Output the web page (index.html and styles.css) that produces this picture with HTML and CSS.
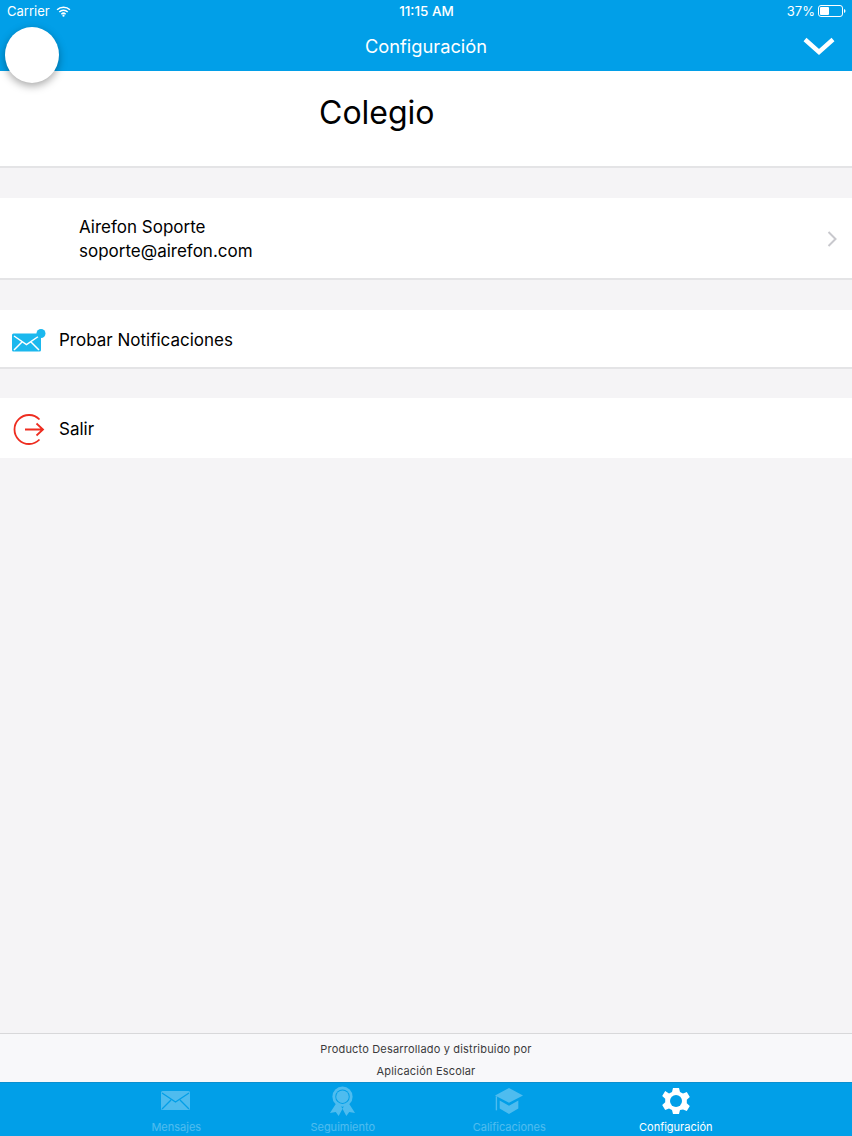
FILE: index.html
```html
<!DOCTYPE html>
<html lang="es">
<head>
<meta charset="utf-8">
<title>Configuración</title>
<link rel="stylesheet" href="styles.css">
</head>
<body>
<div class="app">
  <header class="top">
    <div class="status">
      <div class="status-side">
        <span>Carrier</span>
        <svg class="wifi" viewBox="0 0 16 12" width="15" height="11"><path d="M1 4.200a10 10 0 0 1 14 0M3.400 6.600a6.600 6.600 0 0 1 9.200 0M5.700 8.900a3.300 3.300 0 0 1 4.600 0" fill="none" stroke="#fff" stroke-width="1.600"/><circle cx="8" cy="10.600" r="1.200" fill="#fff"/></svg>
      </div>
      <div class="status-time">11:15 AM</div>
      <div class="status-side status-right">
        <span>37%</span>
        <svg viewBox="0 0 28 12" width="28" height="12"><rect x="0.500" y="0.500" width="24" height="11" rx="2.500" fill="none" stroke="#fff"/><rect x="2" y="2" width="9" height="8" rx="1" fill="#fff"/><path d="M26 4v4a2 2 0 0 0 1.500-2A2 2 0 0 0 26 4z" fill="#fff"/></svg>
      </div>
    </div>
    <div class="nav">
      <div class="nav-title">Configuración</div>
      <svg class="nav-chevron" viewBox="0 0 32 18" width="32" height="18"><path d="M2 2.500 16 15 30 2.500" fill="none" stroke="#fff" stroke-width="4.400"/></svg>
    </div>
  </header>
  <div class="avatar"></div>

  <main class="content">
    <section class="school"><h1>Colegio</h1></section>
    <section class="row row-user">
      <div class="user-text">
        <div>Airefon Soporte</div>
        <div>soporte@airefon.com</div>
      </div>
      <svg class="row-chevron" viewBox="0 0 10 16" width="10" height="16"><path d="M1.500 1 8.500 8 1.500 15" fill="none" stroke="#c8c8cd" stroke-width="2"/></svg>
    </section>
    <section class="row row-test">
      <svg class="row-icon" viewBox="0 0 36 26" width="36" height="26"><rect x="0" y="6.500" width="29" height="18" rx="1.500" fill="#1bb8ee"/><path d="M2 9 14.500 17.500 27 9M2 23l8.500-8.500M27 23l-8.500-8.500" fill="none" stroke="#fff" stroke-width="1.500"/><circle cx="29" cy="6.500" r="4.500" fill="#1bb8ee"/></svg>
      <span>Probar Notificaciones</span>
    </section>
    <section class="row row-exit">
      <svg class="row-icon" viewBox="0 0 36 32" width="36" height="32"><path d="M27.500 6.500A14.500 14.500 0 1 0 27.500 26.500" fill="none" stroke="#ee2d20" stroke-width="1.800"/><path d="M13 16.500H31M24.500 10.500l6.500 6-6.500 6" fill="none" stroke="#ee2d20" stroke-width="1.800"/></svg>
      <span>Salir</span>
    </section>
  </main>

  <footer class="credits">
    <div>Producto Desarrollado y distribuido por</div>
    <div>Aplicación Escolar</div>
  </footer>

  <nav class="tabs">
    <div class="tab">
      <div class="tab-icon"><svg viewBox="0 0 30 20" width="30" height="20"><rect width="29" height="19" rx="1.500" fill="#fff"/><path d="M1 2 14.500 11 28 2M1 18l9-9M28 18l-9-9" fill="none" stroke="#019fe8" stroke-width="1.300"/></svg></div>
      <span>Mensajes</span>
    </div>
    <div class="tab">
      <div class="tab-icon"><svg viewBox="0 0 28 32" width="27" height="31"><path d="M8 17 1 28l6-1 3 4 6-11zM20 17l7 11-6-1-3 4-6-11z" fill="#fff"/><circle cx="14" cy="11" r="10.500" fill="#fff"/><circle cx="14" cy="11" r="7.500" fill="#019fe8"/><circle cx="14" cy="11" r="6.500" fill="#fff"/></svg></div>
      <span>Seguimiento</span>
    </div>
    <div class="tab">
      <div class="tab-icon"><svg viewBox="0 0 32 30" width="30" height="28"><path d="M16 1 31 9 16 17 1 9z" fill="#fff"/><path d="M6 14.500 16 20l10-5.500V23l-10 6-10-6z" fill="#fff"/><path d="M2.500 10v15" stroke="#fff" stroke-width="1.500"/></svg></div>
      <span>Calificaciones</span>
    </div>
    <div class="tab tab-active">
      <div class="tab-icon"><svg viewBox="0 0 28 28" width="28" height="28"><path d="M11 1h6l1 4 3 1.500 3.800-1.500 3 5-3 2.700v3.600l3 2.700-3 5-3.800-1.500L18 23l-1 4h-6l-1-4-3-1.500L3.200 23l-3-5 3-2.700v-3.600l-3-2.700 3-5L7 6.500 10 5z" fill="#fff"/><circle cx="14" cy="14" r="6" fill="#019fe8"/></svg></div>
      <span>Configuración</span>
    </div>
  </nav>
</div>
</body>
</html>
```

FILE: styles.css
```css
* { box-sizing: border-box; }
html, body { margin: 0; padding: 0; }
body {
  width: 852px;
  height: 1136px;
  overflow: hidden;
  font-family: Inter, "Liberation Sans", sans-serif;
  color: #000;
  background: #f5f4f6;
}
.app {
  position: relative;
  display: flex;
  flex-direction: column;
  height: 1136px;
}
.top {
  height: 71px;
  flex: none;
  background: #019fe8;
  color: #fff;
}
.status {
  height: 22px;
  padding: 0 6px 0 7px;
  display: grid;
  grid-template-columns: 1fr auto 1fr;
  align-items: center;
  font-size: 13px;
  color: #fff;
}
.status-side {
  display: flex;
  align-items: center;
  gap: 6px;
}
.status-right { justify-content: flex-end; gap: 3px; }
.status-time { font-size: 13.500px; font-weight: 500; }
.nav {
  height: 49px;
  display: flex;
  align-items: center;
  justify-content: center;
  position: relative;
  padding-bottom: 2px;
}
.nav-title {
  font-size: 18.300px;
}
.nav-chevron {
  position: absolute;
  right: 17px;
  top: 15px;
}
.avatar {
  position: absolute;
  left: 5px;
  top: 27px;
  width: 54px;
  height: 56px;
  border-radius: 50%;
  background: #fff;
  box-shadow: 0 3px 8px rgba(0, 0, 0, .35);
}
.content {
  flex: 1;
  min-height: 0;
}
.school {
  height: 97px;
  background: #fff;
  border-bottom: 2px solid #e4e4e6;
  padding: 22px 0 0 319px;
}
.school h1 {
  margin: 0;
  font-size: 32px;
  font-weight: 400;
  line-height: 40px;
}
.row {
  display: flex;
  align-items: center;
  background: #fff;
  font-size: 17px;
  padding-top: 2px;
}
.row-user {
  height: 82px;
  margin-top: 30px;
  padding-left: 79px;
  padding-right: 15px;
  justify-content: space-between;
  border-bottom: 2px solid #e4e4e6;
  line-height: 24px;
}
.row-test {
  height: 59px;
  margin-top: 30px;
  padding-left: 12px;
  gap: 11px;
  border-bottom: 2px solid #e4e4e6;
}
.row-exit {
  height: 60px;
  margin-top: 29px;
  padding-left: 12px;
  gap: 11px;
}
.credits {
  height: 49px;
  flex: none;
  border-top: 1px solid #d8d8da;
  background: #f8f8fa;
  text-align: center;
  font-size: 11px;
  letter-spacing: .18px;
  line-height: 22px;
  padding-top: 4px;
  color: #3a3a3c;
  overflow: hidden;
}
.tabs {
  height: 54px;
  flex: none;
  background: #019fe8;
  padding: 0 93px;
  display: grid;
  grid-template-columns: repeat(4, 166.500px);
  border-top: 1px solid #0a8fd0;
}
.tab {
  display: flex;
  flex-direction: column;
  align-items: center;
  font-size: 11px;
  color: #fff;
  line-height: 14px;
  opacity: .3;
}
.tab-icon {
  height: 36px;
  margin-bottom: 1px;
  display: flex;
  align-items: center;
  justify-content: center;
}
.tab-active { opacity: 1; }
```
